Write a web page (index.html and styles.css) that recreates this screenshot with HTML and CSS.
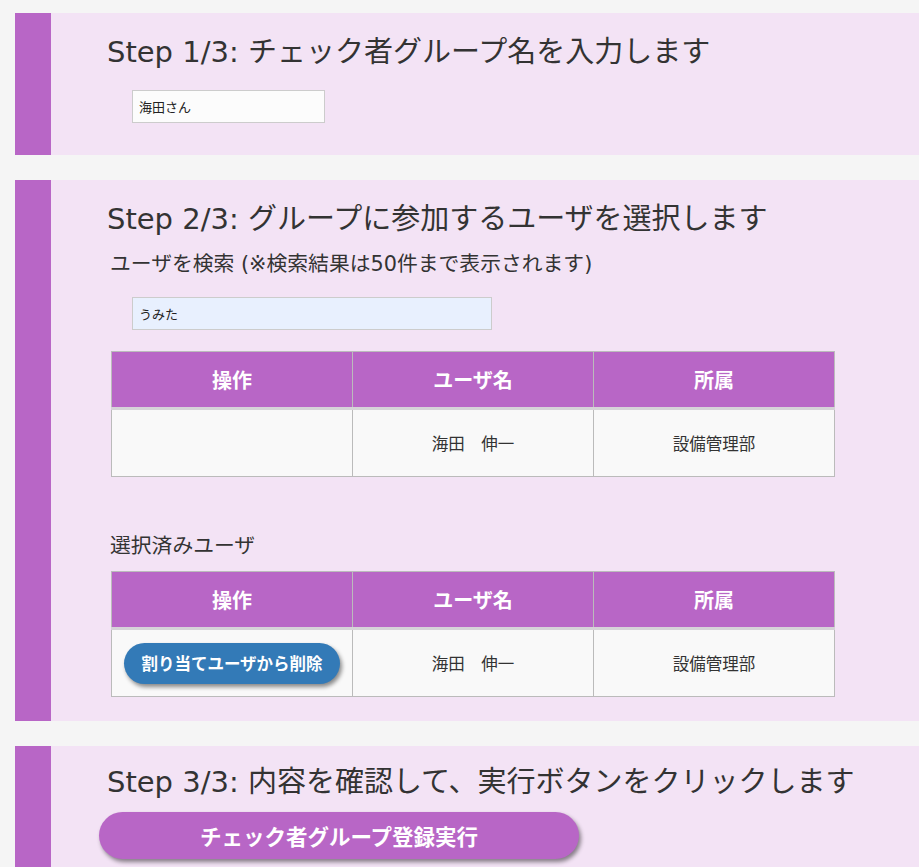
FILE: index.html
```html
<!DOCTYPE html>
<html lang="ja">
<head>
  <meta charset="utf-8">
  <meta name="viewport" content="width=device-width, initial-scale=1.0">
  <title>チェック者グループ登録</title>
  <link rel="stylesheet" href="styles.css">
</head>
<body>
  <!-- Step 1: group name -->
  <section class="step">
    <div class="step-bar"></div>
    <div class="step-body">
      <h2 class="step-title">Step 1/3: チェック者グループ名を入力します</h2>
      <input type="text" class="text-input group-name" value="海田さん">
    </div>
  </section>

  <!-- Step 2: choose users -->
  <section class="step">
    <div class="step-bar"></div>
    <div class="step-body">
      <h2 class="step-title">Step 2/3: グループに参加するユーザを選択します</h2>
      <p class="sub-title">ユーザを検索 (※検索結果は50件まで表示されます)</p>
      <input type="text" class="text-input user-search" value="うみた">

      <table class="user-table">
        <thead>
          <tr><th>操作</th><th>ユーザ名</th><th>所属</th></tr>
        </thead>
        <tbody>
          <tr><td></td><td>海田　伸一</td><td>設備管理部</td></tr>
        </tbody>
      </table>

      <p class="sub-title selected-title">選択済みユーザ</p>
      <table class="user-table">
        <thead>
          <tr><th>操作</th><th>ユーザ名</th><th>所属</th></tr>
        </thead>
        <tbody>
          <tr>
            <td><button class="btn-remove">割り当てユーザから削除</button></td>
            <td>海田　伸一</td>
            <td>設備管理部</td>
          </tr>
        </tbody>
      </table>
    </div>
  </section>

  <!-- Step 3: confirm -->
  <section class="step">
    <div class="step-bar"></div>
    <div class="step-body">
      <h2 class="step-title">Step 3/3: 内容を確認して、実行ボタンをクリックします</h2>
      <button class="btn-submit">チェック者グループ登録実行</button>
    </div>
  </section>
</body>
</html>
```

FILE: styles.css
```css
/* Page base */
body {
  margin: 0;
  padding: 13px 0 0;
  background-color: #f5f5f5;
  color: #333333;
  font-family: "DejaVu Sans", "Noto Sans CJK JP", sans-serif;
}

/* Each step is a pale purple panel with a strong bar on the left */
.step {
  display: flex;
  margin: 0 0 25px 15px;
  background-color: #f3e3f5;
}

.step-bar {
  flex: 0 0 36px;
  background-color: #b866c6;
}

.step-body {
  flex: 1;
  padding: 19px 0 24px 56px;
}

.step:first-child .step-body {
  padding-top: 19px;
  padding-bottom: 32px;
}

.step:last-child .step-body {
  padding-top: 16px;
  padding-bottom: 30px;
}

.step-title {
  margin: 0;
  font-size: 29px;
  line-height: 40px;
  font-weight: normal;
  color: #333333;
}

.sub-title {
  margin: 10px 0 0 3px;
  font-size: 20.8px;
  line-height: 30px;
}

.selected-title {
  margin-top: 54px;
}

/* Text inputs */
.text-input {
  display: block;
  box-sizing: border-box;
  height: 33px;
  margin: 18px 0 0 25px;
  padding: 0 6px;
  font-family: inherit;
  font-size: 13px;
  color: #222222;
  background-color: #fcfcfc;
  border: 1px solid #cccccc;
}

.group-name {
  width: 193px;
}

.user-search {
  width: 360px;
  margin-top: 18px;
  background-color: #e8f0fe;
}

/* User tables */
.user-table {
  width: 724px;
  margin: 21px 0 0 4px;
  border-collapse: collapse;
  table-layout: fixed;
}

.selected-title + .user-table {
  margin-top: 10px;
}

.user-table th,
.user-table td {
  border: 1px solid #bbbbbb;
  text-align: center;
  vertical-align: middle;
  padding: 0;
}

.user-table th {
  height: 55px;
  background-color: #b866c6;
  color: #ffffff;
  font-size: 20px;
  font-weight: bold;
  border-bottom: 3px solid #d6d2d8;
}

.user-table td {
  height: 66px;
  background-color: #f9f9f9;
  font-size: 16.5px;
  color: #333333;
}

/* Buttons */
.btn-remove {
  display: block;
  width: 216px;
  height: 41px;
  margin: 0 0 0 12px;
  padding: 0;
  border: none;
  border-radius: 21px;
  background-color: #337ab7;
  color: #ffffff;
  font-family: inherit;
  font-size: 16.5px;
  font-weight: bold;
  box-shadow: 2px 3px 4px rgba(0, 0, 0, 0.45);
  cursor: pointer;
}

.btn-submit {
  display: block;
  width: 480px;
  height: 47px;
  margin: 10px 0 0 -8px;
  padding: 0;
  border: none;
  border-radius: 24px;
  background-color: #b866c6;
  color: #ffffff;
  font-family: inherit;
  font-size: 21.5px;
  font-weight: bold;
  box-shadow: 2px 3px 4px rgba(0, 0, 0, 0.45);
  cursor: pointer;
}
```
